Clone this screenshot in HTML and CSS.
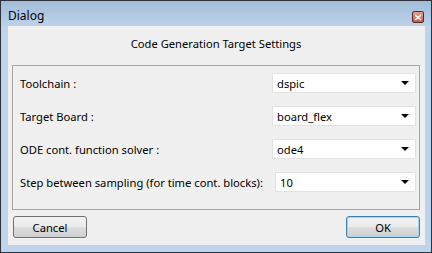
FILE: index.html
```html
<!DOCTYPE html>
<html lang="en">
<head>
    <meta charset="UTF-8">
    <title>Dialog</title>
    <link rel="stylesheet" href="styles.css">
</head>
<body>
    <div class="window">
        <div class="titlebar">
            <span class="caption">Dialog</span>
            <span class="close">
                <svg width="8" height="7" viewBox="0 0 8 7">
                    <path d="M1 1 L7 6 M7 1 L1 6" stroke="#fff" stroke-width="1.6" fill="none"/>
                </svg>
            </span>
        </div>

        <div class="content">
            <div class="heading">Code Generation Target Settings</div>

            <div class="group">
                <div class="row">
                    <span class="label">Toolchain :</span>
                    <div class="combo"><span>dspic</span><span class="arrow"></span></div>
                </div>
                <div class="row">
                    <span class="label">Target Board :</span>
                    <div class="combo"><span>board_flex</span><span class="arrow"></span></div>
                </div>
                <div class="row">
                    <span class="label">ODE cont. function solver :</span>
                    <div class="combo"><span>ode4</span><span class="arrow"></span></div>
                </div>
                <div class="row">
                    <span class="label">Step between sampling (for time cont. blocks):</span>
                    <div class="combo narrow"><span>10</span><span class="arrow"></span></div>
                </div>
            </div>

            <div class="buttons">
                <button class="btn">Cancel</button>
                <button class="btn default">OK</button>
            </div>
        </div>
    </div>
</body>
</html>
```

FILE: styles.css
```css
body {
    margin: 0;
    font-family: "Noto Sans", "Open Sans", sans-serif;
    font-size: 11.2px;
    color: #000;
    background: #fff;
}
.window {
    width: 432px;
    height: 253px;
    box-sizing: border-box;
    border: 1px solid #2f3339;
    background: #bdd4ea;
    padding: 0 6px 7px 7px;
    display: flex;
    flex-direction: column;
}
.titlebar {
    height: 25px;
    margin: 0 -6px 0 -7px;
    padding: 0 7px 0 7px;
    background: linear-gradient(to bottom, #a2bcd8, #bcd3ea);
    display: flex;
    align-items: flex-start;
}
.caption {
    font-size: 12px;
    line-height: 16px;
    padding-top: 7px;
}
.close {
    margin-left: auto;
    margin-top: 10px;
    width: 12px;
    height: 12px;
    box-sizing: border-box;
    border: 1px solid #5a2a2a;
    border-radius: 2px;
    background: linear-gradient(to bottom, #e0a090, #c85a4c);
    display: flex;
    align-items: center;
    justify-content: center;
}
.content {
    flex: 1;
    background: #f0f0f0;
    padding: 0 5px 0 4px;
    display: flex;
    flex-direction: column;
}
.heading {
    text-align: center;
    line-height: 16px;
    padding-top: 10px;
    margin-bottom: 13px;
}
.group {
    border: 1px solid #a5a5a5;
    padding: 7px 3px 17px 7px;
    display: flex;
    flex-direction: column;
    gap: 13px;
}
.row {
    display: flex;
    align-items: center;
    justify-content: space-between;
    height: 20px;
}
.label {
    white-space: nowrap;
}
.combo {
    width: 144px;
    height: 20px;
    box-sizing: border-box;
    background: #fff;
    border: 1px solid #e2e2e2;
    padding: 0 6px 0 4px;
    display: flex;
    align-items: center;
    justify-content: space-between;
}
.combo.narrow {
    width: 141px;
}
.arrow {
    width: 0;
    height: 0;
    border-left: 4px solid transparent;
    border-right: 4px solid transparent;
    border-top: 4px solid #000;
}
.buttons {
    display: flex;
    justify-content: space-between;
    margin-top: 6px;
    padding-left: 1px;
}
.btn {
    width: 74px;
    height: 22px;
    font-family: inherit;
    font-size: 11.2px;
    color: #000;
    border: 1px solid #707070;
    border-radius: 3px;
    background: linear-gradient(to bottom, #f2f2f2 0%, #ebebeb 50%, #dddddd 51%, #cfcfcf 100%);
    padding: 0;
}
.btn.default {
    border-color: #3c7fb1;
    box-shadow: inset 0 0 0 1px #9fd8f5;
}
```
